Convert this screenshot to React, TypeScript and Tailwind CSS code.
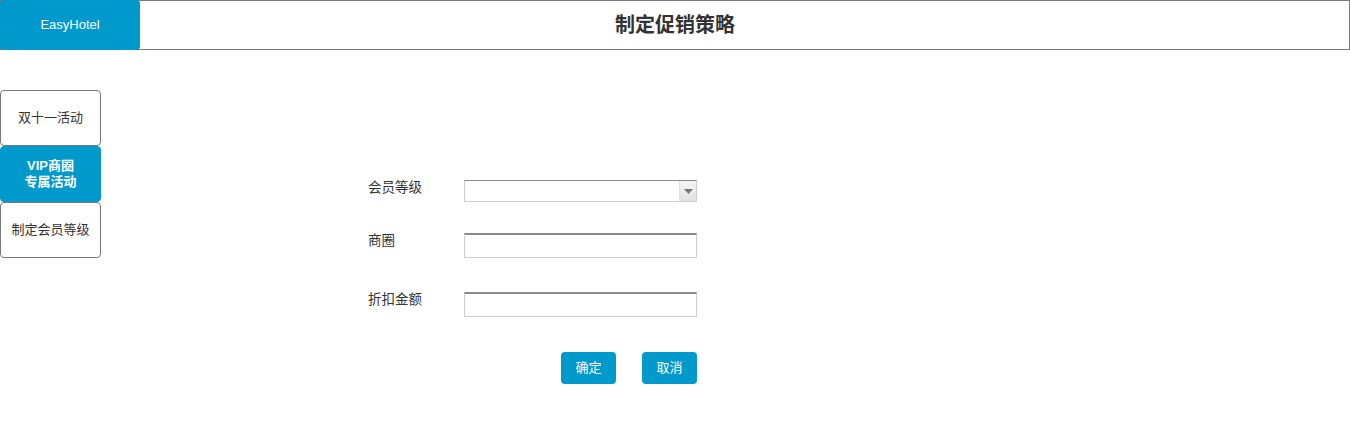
const FONT = "font-['Liberation_Sans','Noto_Sans_CJK_SC',sans-serif]"

const MENU = [
  { id: 'double11', label: '双十一活动', active: false },
  { id: 'vip', label: 'VIP商圈\n专属活动', active: true },
  { id: 'level', label: '制定会员等级', active: false },
]

function Field({ label, children, className = '' }: { label: string; children: React.ReactNode; className?: string }) {
  return (
    <div className={`flex items-start ${className}`}>
      <span className="w-[96px] -mt-[2px] text-[13.5px] leading-[16px] text-[#333]">{label}</span>
      {children}
    </div>
  )
}

export default function App() {
  return (
    <div className={`${FONT} w-[1350px] h-[443px] bg-white text-[#333]`}>
      {/* Header */}
      <header className="relative flex items-center h-[50px] border border-[#797979]">
        <div className="absolute -left-px -top-px w-[140px] h-[50px] rounded-[4px] bg-[#0099cc] flex items-center justify-center text-[13px] text-white">
          EasyHotel
        </div>
        <h1 className="flex-1 text-center text-[20px] font-bold text-[#333]">制定促销策略</h1>
      </header>

      <div className="flex">
        {/* Side menu */}
        <nav className="flex flex-col w-[101px] mt-[40px]">
          {MENU.map((m) => (
            <button
              key={m.id}
              className={`h-[56px] rounded-[4px] border whitespace-pre-line text-center leading-[16px] text-[13px] ${
                m.active
                  ? 'bg-[#0099cc] border-[#0099cc] text-white font-bold'
                  : 'bg-white border-[#797979] text-[#333]'
              }`}
            >
              {m.label}
            </button>
          ))}
        </nav>

        {/* Form */}
        <form className="ml-[267px] mt-[131px] flex flex-col w-[329px]">
          <Field label="会员等级" className="pt-px">
            <div className="relative flex w-[233px] h-[22px] -mt-[2px] border border-[#cfcfcf] border-t-[#8a8a8a] bg-white">
              <div className="flex-1" />
              <div className="w-[17px] h-full bg-gradient-to-b from-[#f4f4f4] to-[#e2e2e2] border-l border-[#e0e0e0] flex items-center justify-center">
                <svg width="9" height="5" viewBox="0 0 9 5">
                  <path d="M0 0h9L4.5 5z" fill="#777" />
                </svg>
              </div>
            </div>
          </Field>
          <Field label="商圈" className="mt-[33px]">
            <input className="w-[233px] h-[25px] -mt-[2px] border border-[#cfcfcf] border-t-[#8a8a8a] border-t-2 outline-none" />
          </Field>
          <Field label="折扣金额" className="mt-[36px]">
            <input className="w-[233px] h-[25px] -mt-[2px] border border-[#cfcfcf] border-t-[#8a8a8a] border-t-2 outline-none" />
          </Field>
          <div className="flex justify-end gap-[26px] mt-[35px]">
            <button type="button" className="w-[55px] h-[32px] rounded-[4px] bg-[#0099cc] text-white text-[13px]">确定</button>
            <button type="button" className="w-[55px] h-[32px] rounded-[4px] bg-[#0099cc] text-white text-[13px]">取消</button>
          </div>
        </form>
      </div>
    </div>
  )
}
